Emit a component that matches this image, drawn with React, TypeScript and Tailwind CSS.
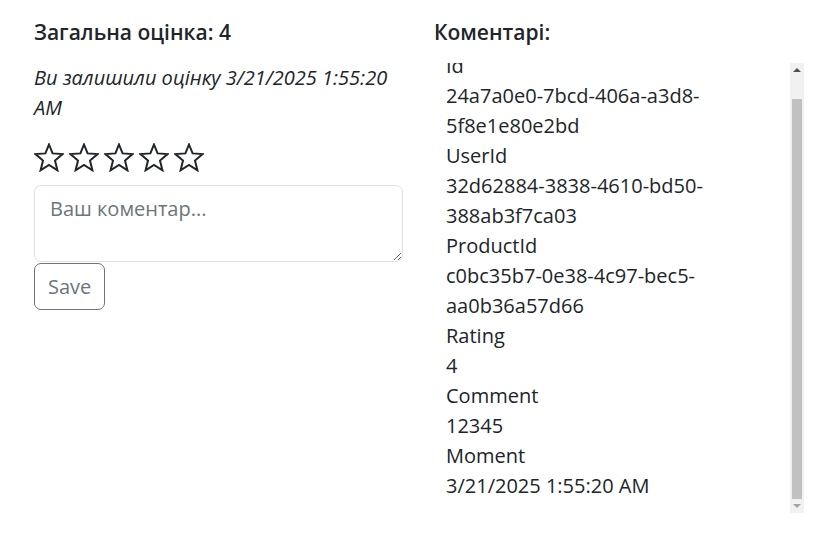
import { useEffect, useRef } from "react";

const comment = [
  "Id",
  "24a7a0e0-7bcd-406a-a3d8-",
  "5f8e1e80e2bd",
  "UserId",
  "32d62884-3838-4610-bd50-",
  "388ab3f7ca03",
  "ProductId",
  "c0bc35b7-0e38-4c97-bec5-",
  "aa0b36a57d66",
  "Rating",
  "4",
  "Comment",
  "12345",
  "Moment",
  "3/21/2025 1:55:20 AM",
];

const Star = () => (
  <svg width="30" height="29" viewBox="0 0 30 29" className="shrink-0">
    <polygon
      points="15,1.5 18.6,10.4 28.6,11.1 21,17.6 23.4,27.3 15,22 6.6,27.3 9,17.6 1.4,11.1 11.4,10.4"
      fill="none"
      stroke="#212529"
      strokeWidth="2"
      strokeLinejoin="miter"
    />
  </svg>
);

export default function App() {
  const boxRef = useRef<HTMLDivElement>(null);

  useEffect(() => {
    if (boxRef.current) boxRef.current.scrollTop = boxRef.current.scrollHeight;
  }, []);

  return (
    <div className="min-h-[533px] bg-white text-[#212529] font-['Segoe_UI','Open_Sans',sans-serif] text-[20px] leading-[30px]">
      <div className="flex gap-[31px] pl-[34px] pt-[20px]">
        {/* rating column */}
        <div className="w-[369px] flex flex-col">
          <h5 className="text-[21px] leading-[24px] font-semibold">Загальна оцінка: 4</h5>
          <p className="mt-[19px] italic">Ви залишили оцінку 3/21/2025 1:55:20 AM</p>
          <div className="mt-[20px] flex gap-[5px]">
            <Star />
            <Star />
            <Star />
            <Star />
            <Star />
          </div>
          <textarea
            placeholder="Ваш коментар..."
            className="mt-[13px] h-[77px] w-full rounded-[7px] border border-[#dee2e6] px-[15px] py-[8px] outline-none placeholder:text-[#6c757d]"
          />
          <div>
            <button className="mt-px h-[47px] rounded-[7px] border border-[#6c757d] px-[13px] text-[#6c757d]">
              Save
            </button>
          </div>
        </div>

        {/* comments column */}
        <div className="w-[370px] flex flex-col">
          <h5 className="text-[21px] leading-[24px] font-semibold">Коментарі:</h5>
          <div className="mt-[19px] flex h-[450px]">
            <div ref={boxRef} className="flex-1 overflow-y-scroll [scrollbar-width:none] p-[12px]">
              {comment.map((line, i) => (
                <div key={i} className="whitespace-nowrap">{line}</div>
              ))}
            </div>
            <div className="w-[14px] bg-[#f1f1f1] flex flex-col items-center">
              <div className="h-[14px] flex items-center justify-center">
                <div className="w-0 h-0 border-x-[4px] border-x-transparent border-b-[4px] border-b-[#505050]" />
              </div>
              <div className="flex-1 w-full flex flex-col justify-end px-[2px]">
                <div className="h-[400px] bg-[#c1c1c1]" />
              </div>
              <div className="h-[14px] flex items-center justify-center">
                <div className="w-0 h-0 border-x-[4px] border-x-transparent border-t-[4px] border-t-[#a3a3a3]" />
              </div>
            </div>
          </div>
        </div>
      </div>
    </div>
  );
}
